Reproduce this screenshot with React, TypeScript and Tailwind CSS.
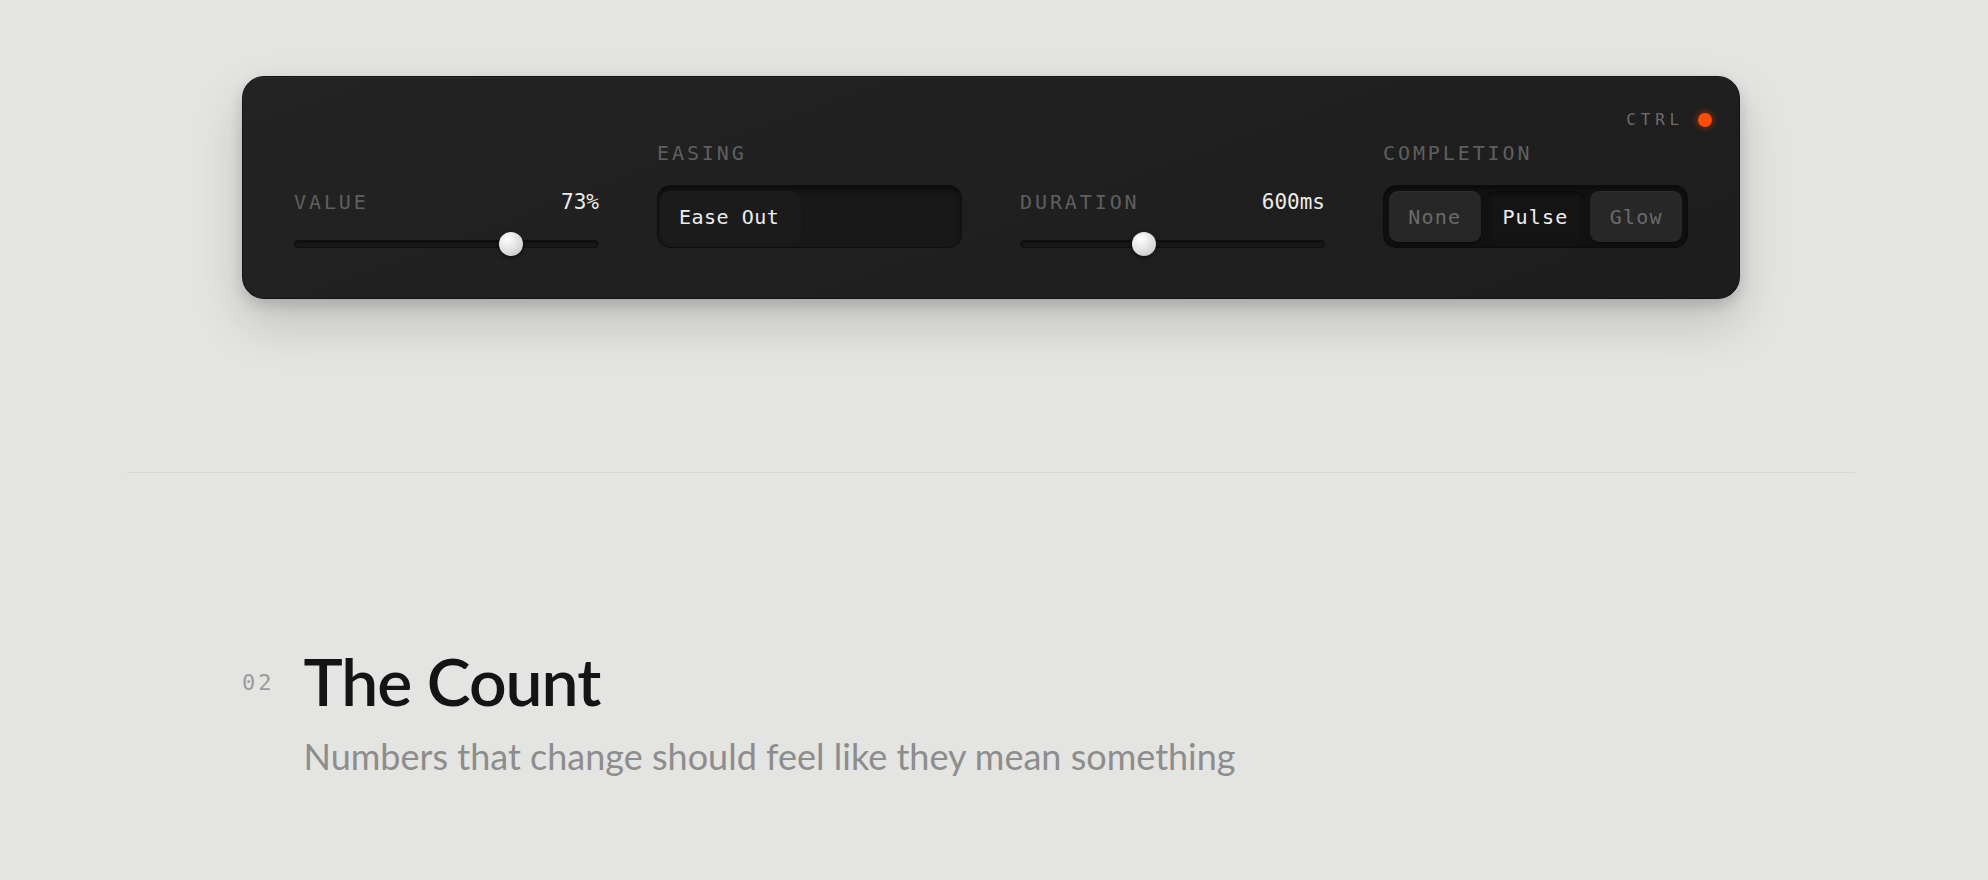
import React from "react";

const mono = "font-['DejaVu_Sans_Mono',monospace]";

function Label({ children }: { children: React.ReactNode }) {
  return (
    <span className={`${mono} text-[20px] leading-[30px] tracking-[2.9px] text-[#5f5f5f] uppercase`}>
      {children}
    </span>
  );
}

interface SliderProps {
  label: string;
  display: string;
  frac: number; // 0..1
}

function Slider({ label, display, frac }: SliderProps) {
  return (
    <div className="flex flex-col">
      <div className="flex items-baseline justify-between">
        <Label>{label}</Label>
        <span className={`${mono} text-[21px] leading-[30px] text-[#ececec]`}>{display}</span>
      </div>
      <div className="relative mt-[15px] flex h-6 items-center">
        <div className="h-2 w-full rounded-full border border-[#101010] bg-[#171717] shadow-[inset_0_1px_2px_rgba(0,0,0,0.6)]" />
        <div
          className="absolute top-0 h-6 w-6 rounded-full bg-[radial-gradient(circle_at_35%_30%,#ffffff,#e4e4e4_45%,#bdbdbd)] shadow-[0_2px_5px_rgba(0,0,0,0.55)]"
          style={{ left: `calc(${frac} * (100% - 24px))` }}
        />
      </div>
    </div>
  );
}

function Easing() {
  return (
    <div className="mb-2 flex flex-col">
      <Label>Easing</Label>
      <div className="mt-[17px] flex h-[63px] rounded-[13px] border border-[#0e0e0e] bg-[#181818] py-[5px] pl-[2px] pr-[5px] shadow-[inset_0_6px_6px_-2px_rgba(0,0,0,0.55)]">
        <div className="flex w-[141px] items-center rounded-[10px] bg-[#1b1b1b] pl-[19px] shadow-[0_1px_0_rgba(255,255,255,0.02)]">
          <span className={`${mono} text-[20px] tracking-[0.5px] text-[#ededed]`}>Ease Out</span>
        </div>
      </div>
    </div>
  );
}

function Completion() {
  const opts = [
    { name: "None", w: "w-[92px]", active: false },
    { name: "Pulse", w: "w-[100px]", active: true },
    { name: "Glow", w: "w-[92px]", active: false },
  ];
  return (
    <div className="mb-2 flex flex-col">
      <Label>Completion</Label>
      <div className="mt-[17px] flex h-[63px] gap-[5px] rounded-[13px] border border-[#0c0c0c] bg-[#121212] p-[5px] shadow-[inset_0_2px_4px_rgba(0,0,0,0.6)]">
        {opts.map((o) => (
          <div
            key={o.name}
            className={[
              "flex items-center justify-center rounded-[9px]",
              o.w,
              o.active
                ? "bg-[#141414] text-[#f0f0f0] shadow-[inset_0_2px_4px_rgba(0,0,0,0.5)]"
                : "bg-[#272727] text-[#6a6a6a] shadow-[inset_0_1px_0_rgba(255,255,255,0.04),0_2px_3px_rgba(0,0,0,0.4)]",
            ].join(" ")}
          >
            <span className={`${mono} text-[20px] tracking-[1.2px]`}>{o.name}</span>
          </div>
        ))}
      </div>
    </div>
  );
}

export default function App() {
  return (
    <div className="min-h-screen bg-[#e4e4e2] pt-[76px]">
      <div className="ml-[127px] w-[1728px]">
        <div className="relative mx-[115px] rounded-[22px] border border-[#131313] bg-[linear-gradient(160deg,#232323,#1f1f1f_60%,#1d1d1d)] px-[51px] pb-[42px] pt-[61px] shadow-[0_24px_50px_rgba(0,0,0,0.16),0_6px_14px_rgba(0,0,0,0.14),inset_0_1px_0_rgba(255,255,255,0.04)]">
          <div className="absolute right-[27px] top-[33px] flex items-center gap-[14px]">
            <span className={`${mono} text-[16px] leading-[20px] tracking-[4.8px] text-[#6c6c6c]`}>CTRL</span>
            <span className="h-[14px] w-[14px] rounded-full bg-[#ff4a0a] shadow-[0_0_6px_2px_rgba(255,74,10,0.35)]" />
          </div>
          <div className="grid grid-cols-4 items-end gap-x-[58px]">
            <Slider label="Value" display="73%" frac={0.73} />
            <Easing />
            <Slider label="Duration" display="600ms" frac={0.4} />
            <Completion />
          </div>
        </div>

        <div className="mt-[173px] h-px bg-[#d7d7d5]" />

        <div className="ml-[115px] mt-[168px] flex items-start gap-[29px]">
          <span className={`${mono} mt-[27px] text-[22px] leading-[30px] tracking-[3px] text-[#9b9b9b]`}>02</span>
          <div className="flex flex-col">
            <h2 className="font-['Lato',sans-serif] text-[66px] font-semibold leading-[80px] tracking-[-1px] text-[#141414]">
              The Count
            </h2>
            <p className="mt-[13px] font-['Lato',sans-serif] text-[36px] leading-[44px] text-[#8d8d8d]">
              Numbers that change should feel like they mean something
            </p>
          </div>
        </div>
      </div>
    </div>
  );
}
